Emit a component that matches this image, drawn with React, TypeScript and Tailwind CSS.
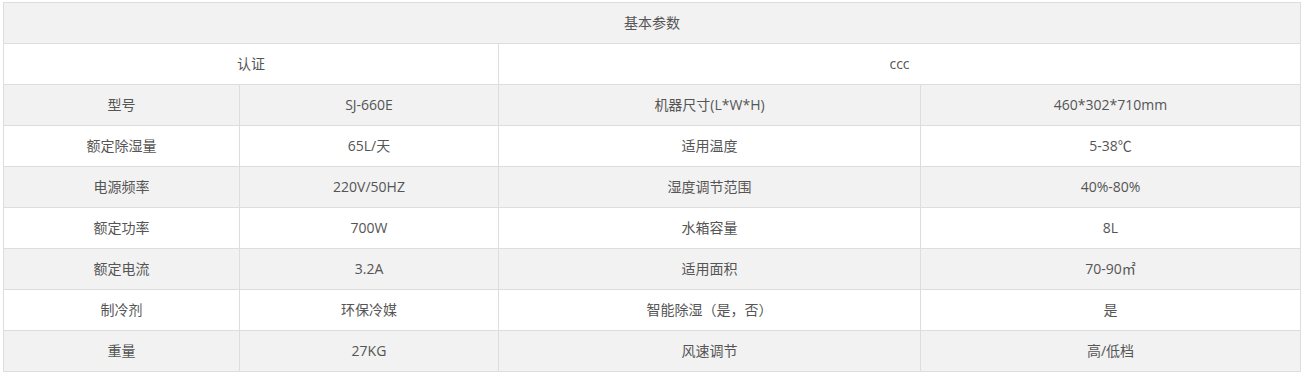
import React from "react";

const rows: [string, string, string, string][] = [
  ["型号", "SJ-660E", "机器尺寸(L*W*H)", "460*302*710mm"],
  ["额定除湿量", "65L/天", "适用温度", "5-38℃"],
  ["电源频率", "220V/50HZ", "湿度调节范围", "40%-80%"],
  ["额定功率", "700W", "水箱容量", "8L"],
  ["额定电流", "3.2A", "适用面积", "70-90㎡"],
  ["制冷剂", "环保冷媒", "智能除湿（是，否）", "是"],
  ["重量", "27KG", "风速调节", "高/低档"],
];

const td = "border border-[#dddddd] h-[41px] p-0 text-center align-middle";

export default function App() {
  return (
    <div
      className="bg-white w-[1306px] h-[376px] pl-[3px] pt-[2px] text-[14px] leading-[20px] text-[#555555]"
      style={{ fontFamily: '"Open Sans", "Noto Sans CJK SC", sans-serif' }}
    >
      <table className="table-fixed border-collapse w-[1297px]">
        <colgroup>
          <col className="w-[236px]" />
          <col className="w-[259px]" />
          <col className="w-[422px]" />
          <col className="w-[380px]" />
        </colgroup>
        <tbody>
          <tr className="bg-[#f2f2f2]">
            <td className={td} colSpan={4}>基本参数</td>
          </tr>
          <tr className="bg-white">
            <td className={td} colSpan={2}>认证</td>
            <td className={td} colSpan={2}>ccc</td>
          </tr>
          {rows.map((r, i) => (
            <tr key={i} className={i % 2 === 0 ? "bg-[#f2f2f2]" : "bg-white"}>
              {r.map((c, j) => (
                <td key={j} className={td}>{c}</td>
              ))}
            </tr>
          ))}
        </tbody>
      </table>
    </div>
  );
}
